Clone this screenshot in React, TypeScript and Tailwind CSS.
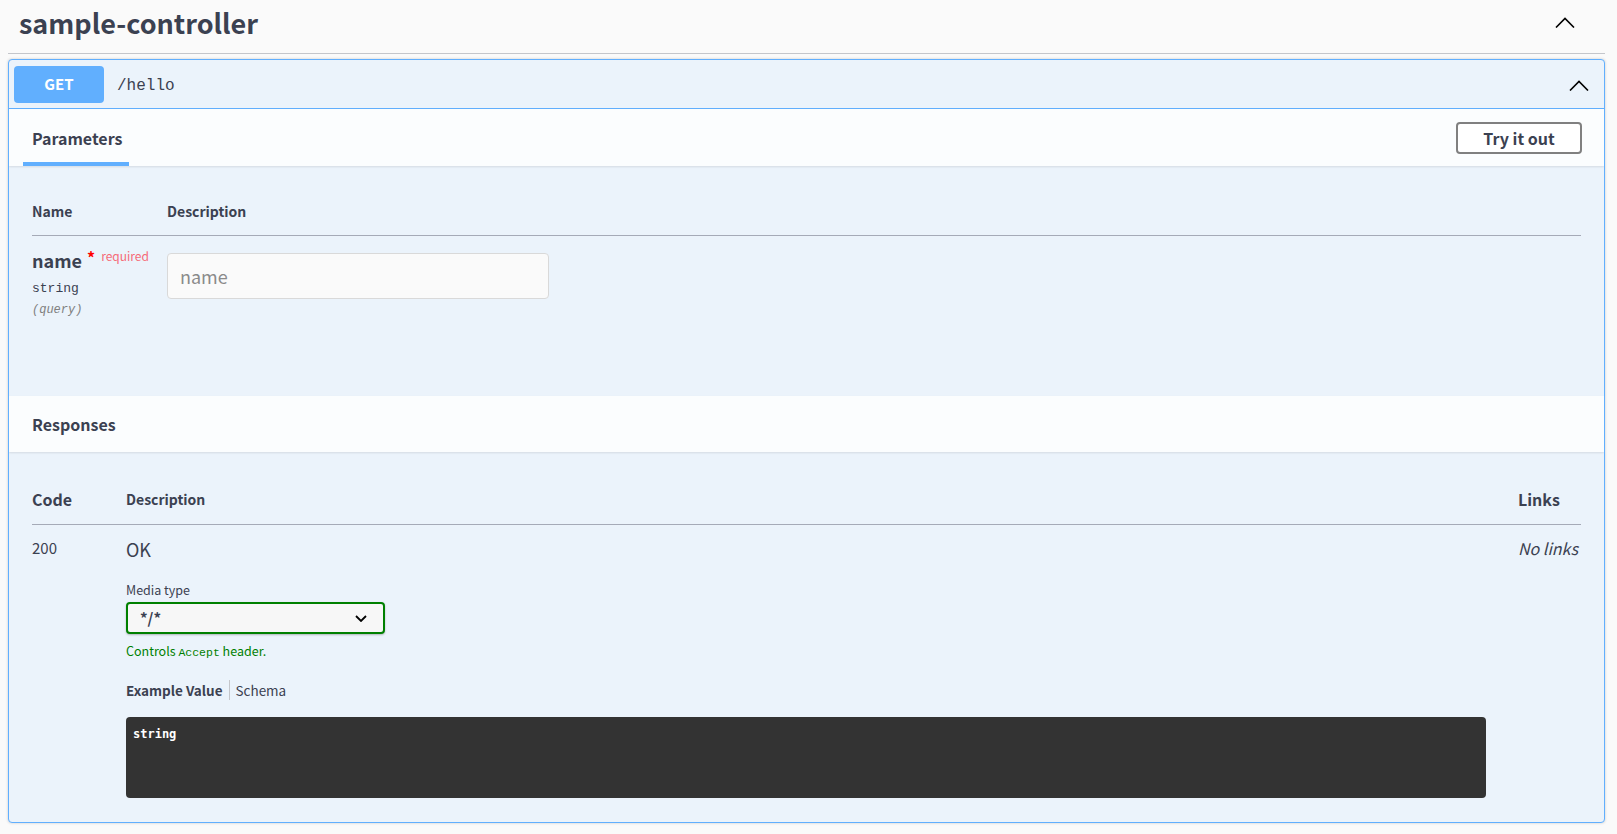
import React from 'react';

const sans = "font-['Noto_Sans_CJK_JP','Noto_Sans',sans-serif]";
const mono = "font-['Liberation_Mono',monospace]";

function ChevronUp({ className }: { className?: string }) {
  return (
    <svg viewBox="0 0 20 11" className={className} fill="none" stroke="#000" strokeWidth="1.6">
      <polyline points="1,10.5 10,1.5 19,10.5" />
    </svg>
  );
}

function ChevronDown() {
  return (
    <svg viewBox="0 0 12 7" className="h-[7px] w-[12px]" fill="none" stroke="#000" strokeWidth="1.8">
      <polyline points="1,1 6,6 11,1" />
    </svg>
  );
}

export default function App() {
  return (
    <div className={`min-h-screen bg-[#fafafa] pl-2 pr-[12px] text-[#3b4151] ${sans}`}>
      {/* tag header */}
      <div className="flex h-[54px] items-center justify-between border-b border-[#c4c6cb] pb-[9px] pl-[11px] pr-[30px]">
        <h3 className="text-[27px] font-bold leading-none">sample-controller</h3>
        <ChevronUp className="mt-[1px] h-[11px] w-[20px]" />
      </div>

      <div className="mt-[5px] overflow-hidden rounded border border-[#61affe] bg-[#ebf3fb] shadow-[0_0_3px_rgba(0,0,0,0.19)]">
        {/* summary */}
        <div className="flex items-center border-b border-[#61affe] p-[5px] pt-[6px]">
          <div className="flex h-[37px] w-[90px] items-center justify-center rounded bg-[#61affe] text-[15px] font-bold text-white">
            GET
          </div>
          <span className={`ml-[13px] mt-[3px] text-[16px] text-[#3b4151] ${mono}`}>/hello</span>
          <ChevronUp className="ml-auto mr-[10px] mt-[2px] h-[11px] w-[20px]" />
        </div>

        {/* parameters header */}
        <div className="flex h-[57px] items-center justify-between bg-white/80 pl-[14px] pr-[22px] shadow-[0_1px_2px_rgba(0,0,0,0.1)]">
          <div className="flex h-full flex-col justify-end">
            <div className="flex flex-1 items-center px-[9px] pt-[5px] text-[16px] font-bold">Parameters</div>
            <div className="h-[4px] w-[106px] bg-[#61affe]" />
          </div>
          <button className="h-[32px] w-[126px] rounded border-2 border-[#808080] bg-white text-[16px] font-bold text-[#3b4151]">
            Try it out
          </button>
        </div>

        {/* parameters body */}
        <div className="h-[230px] px-[23px] pt-[20px]">
          <div className="grid h-[50px] grid-cols-[135px_1fr] items-center border-b border-[#a5aab7] pt-[2px] text-[14px] font-bold">
            <div>Name</div>
            <div>Description</div>
          </div>
          <div className="grid grid-cols-[135px_1fr]">
            <div className="pt-[13px]">
              <div className="flex items-start">
                <span className="text-[18px] font-bold leading-[22px]">name</span>
                <span className="ml-[5px] text-[16px] font-bold leading-[16px] text-[#ff0000]">*</span>
                <span className="ml-[6px] text-[12px] leading-[14px] text-[#f66a78]">required</span>
              </div>
              <div className={`mt-[9px] text-[13px] leading-[18px] ${mono}`}>string</div>
              <div className={`mt-[4px] text-[12px] italic leading-[16px] text-[#808080] ${mono}`}>(query)</div>
            </div>
            <div className="pt-[17px]">
              <div className="flex h-[46px] w-[382px] items-center rounded border border-[#d9d9d9] bg-[#fafafa] px-[12px] text-[18px] text-[#8a8a8a]">
                name
              </div>
            </div>
          </div>
        </div>

        {/* responses header */}
        <div className="flex h-[56px] items-center bg-white/80 px-[23px] shadow-[0_1px_2px_rgba(0,0,0,0.1)]">
          <span className="text-[16px] font-bold">Responses</span>
        </div>

        {/* responses body */}
        <div className="px-[23px] pb-[24px] pt-[29px]">
          <div className="grid h-[44px] grid-cols-[94px_1fr_63px] items-center border-b border-[#a5aab7] pb-[7px] font-bold">
            <div className="text-[16px]">Code</div>
            <div className="text-[14px]">Description</div>
            <div className="text-[16px]">Links</div>
          </div>
          <div className="grid grid-cols-[94px_1fr_63px] pt-[13px]">
            <div className="text-[15px] leading-[20px]">200</div>
            <div className="pr-[32px]">
              <div className="text-[18px] leading-[22px]">OK</div>
              <div className="mt-[22px] text-[12.5px] leading-[16px]">Media type</div>
              <div className="mt-[4px] flex h-[32px] w-[259px] items-center justify-between rounded border-2 border-[#008000] bg-[#f7f7f7] pl-[12px] pr-[16px] shadow-[0_1px_2px_rgba(0,0,0,0.25)]">
                <span className="text-[15px] font-bold">*/*</span>
                <ChevronDown />
              </div>
              <div className="mt-[9px] text-[12.5px] leading-[16px] text-[#008000]">
                Controls <span className={`text-[11.5px] ${mono}`}>Accept</span> header.
              </div>
              <div className="mt-[19px] flex h-[20px] items-center text-[13.5px]">
                <span className="font-bold">Example Value</span>
                <span className="mx-[6px] h-[20px] w-px bg-[#c4c6cb]" />
                <span>Schema</span>
              </div>
              <div className="mt-[17px] h-[81px] rounded bg-[#333333] px-[7px] pt-[6px] leading-[16px]">
                <span className="font-['DejaVu_Sans_Mono',monospace] text-[12px] font-bold leading-[16px] text-white">string</span>
              </div>
            </div>
            <div className="text-[16px] italic leading-[20px]">No links</div>
          </div>
        </div>
      </div>
    </div>
  );
}
